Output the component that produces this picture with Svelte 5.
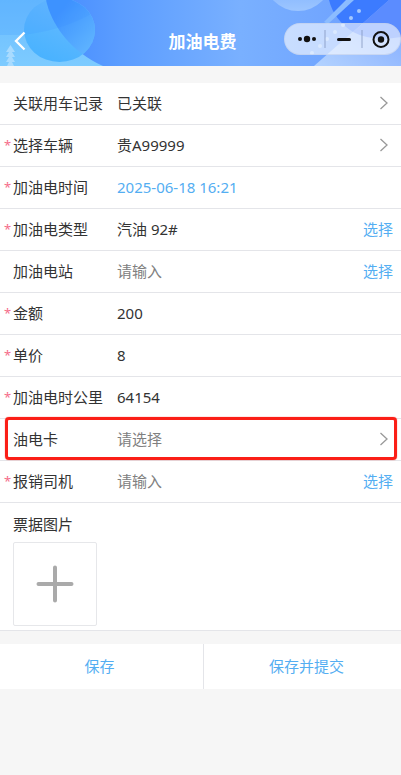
<script>
  let fields = [
    { id: "record", label: "关联用车记录", value: "已关联", type: "link" },
    { id: "car", label: "选择车辆", value: "贵A99999", type: "link", required: true },
    { id: "time", label: "加油电时间", value: "2025-06-18 16:21", type: "date", required: true },
    { id: "kind", label: "加油电类型", value: "汽油 92#", type: "input", required: true, choose: true },
    { id: "station", label: "加油电站", value: "", type: "input", choose: true },
    { id: "amount", label: "金额", value: "200", type: "input", required: true },
    { id: "price", label: "单价", value: "8", type: "input", required: true },
    { id: "mileage", label: "加油电时公里", value: "64154", type: "input", required: true },
    { id: "card", label: "油电卡", value: "", type: "link", marked: true },
    { id: "driver", label: "报销司机", value: "", type: "input", required: true, choose: true },
  ];
</script>

<header class="header">
  <svg class="sky" viewBox="0 0 401 66" preserveAspectRatio="xMidYMid slice" aria-hidden="true">
    <defs>
      <linearGradient id="base" x1="0" y1="0" x2="1" y2="0">
        <stop offset="0.1" stop-color="#4389ff" />
        <stop offset="0.3" stop-color="#5b9dff" />
        <stop offset="0.6" stop-color="#79b0ff" />
        <stop offset="1" stop-color="#6b9dff" />
      </linearGradient>
      <linearGradient id="left" x1="0" y1="0" x2="0" y2="1">
        <stop offset="0" stop-color="#6bbcff" />
        <stop offset="1" stop-color="#7dcbff" />
      </linearGradient>
      <linearGradient id="ball" x1="0.8" y1="0" x2="0.3" y2="1">
        <stop offset="0" stop-color="#6cbcff" />
        <stop offset="1" stop-color="#48b2ff" />
      </linearGradient>
      <linearGradient id="ballDark" x1="0" y1="0" x2="1" y2="1">
        <stop offset="0.2" stop-color="#3f94ff" />
        <stop offset="0.9" stop-color="#66bbff" />
      </linearGradient>
      <linearGradient id="moon" x1="0" y1="0" x2="0" y2="1">
        <stop offset="0.6" stop-color="#7fb2ff" />
        <stop offset="1" stop-color="#9dc6ff" />
      </linearGradient>
      <linearGradient id="hill" x1="0" y1="1" x2="1" y2="0">
        <stop offset="0" stop-color="#b4d3ff" />
        <stop offset="1" stop-color="#7ba6ff" />
      </linearGradient>
      <clipPath id="inBall"><ellipse cx="59.5" cy="30" rx="35.5" ry="32" /></clipPath>
    </defs>
    <rect width="401" height="66" fill="url(#base)" />
    <path d="M0 0H46C52 27 72 52 103 66H0Z" fill="url(#left)" />
    <path d="M0 0H46L53 20L57 28Q35 36 0 35Z" fill="#4da4ff" opacity="0.3" />
    <ellipse cx="59.5" cy="30" rx="35.5" ry="32" fill="url(#ball)" />
    <g clip-path="url(#inBall)">
      <path d="M46 0C52 27 72 52 103 66V0Z" fill="url(#ballDark)" />
      <path d="M20 35Q70 31 114 0H20Z" fill="#2f83ff" opacity="0.12" />
    </g>
    <path d="M10.500 45l4.500 7h-3l3 5h-3l3 5h-3l2 4h-7l2-4h-3l3-5h-3l3-5h-3z" fill="#a8dbff" />
    <circle cx="298" cy="-23" r="34" fill="url(#moon)" />
    <path d="M389 0L314 66H401V0Z" fill="url(#hill)" />
    <path d="M329 0H389L353 32Q334 20 329 0Z" fill="#3c7bff" />
    <path d="M389 0L353 32Q372 42 401 37V0Z" fill="#5b8cff" />
    <path d="M346 0H354L328 24L324 22Z" fill="#8bbcff" />
    <g fill="#a3c8ff">
      <circle cx="359" cy="11" r="2" />
      <circle cx="351" cy="18" r="2" />
      <circle cx="343" cy="25" r="2" />
      <circle cx="335" cy="32" r="2" />
      <circle cx="327" cy="39" r="2" />
      <circle cx="320" cy="46" r="2" />
      <circle cx="312" cy="53" r="2" />
    </g>
  </svg>
  <button class="back" aria-label="返回">
    <svg width="12" height="20" viewBox="0 0 12 20">
      <path d="M10.500 1.500L2 10l8.500 8.500" fill="none" stroke="#fff" stroke-width="2.300" />
    </svg>
  </button>
  <h1>加油电费</h1>
  <div class="capsule">
    <button aria-label="更多">
      <svg width="20" height="20" viewBox="0 0 20 20">
        <circle cx="3" cy="10" r="2" /><circle cx="10" cy="10" r="3.200" /><circle cx="17" cy="10" r="2" />
      </svg>
    </button>
    <button aria-label="最小化">
      <svg width="20" height="20" viewBox="0 0 20 20"><rect x="3" y="9" width="14" height="3" rx="1.500" /></svg>
    </button>
    <button aria-label="关闭">
      <svg width="20" height="20" viewBox="0 0 20 20">
        <circle cx="10" cy="10.500" r="7.500" fill="none" stroke="#111" stroke-width="2" />
        <circle cx="10" cy="10.500" r="3.200" />
      </svg>
    </button>
  </div>
</header>

<main>
  <form class="form">
    {#each fields as f}
      <div class="row" class:marked={f.marked}>
        <span class="star">{f.required ? "*" : ""}</span>
        <label for={f.id}>{f.label}</label>
        {#if f.type === "input"}
          <input id={f.id} type="text" placeholder="请输入" bind:value={f.value} />
        {:else}
          <button
            type="button"
            id={f.id}
            class="value"
            class:date={f.type === "date"}
            class:empty={f.value === ""}>{f.value || "请选择"}</button>
        {/if}
        {#if f.choose}
          <button type="button" class="choose">选择</button>
        {/if}
        {#if f.type === "link"}
          <svg class="arrow" width="10" height="14" viewBox="0 0 10 14" aria-hidden="true">
            <path d="M1.500 1L8 7l-6.500 6" fill="none" stroke="#999" stroke-width="1.300" />
          </svg>
        {/if}
      </div>
    {/each}
    <div class="photos">
      <span id="photoLabel">票据图片</span>
      <button type="button" class="upload" aria-labelledby="photoLabel">
        <svg width="38" height="38" viewBox="0 0 38 38">
          <path d="M19 2.500v33M2.500 19h33" stroke="#aaa" stroke-width="4" stroke-linecap="round" />
        </svg>
      </button>
    </div>
  </form>

  <div class="actions">
    <button type="button">保存</button>
    <button type="button">保存并提交</button>
  </div>
</main>

<style>
  :global(body) {
    background: #f6f6f6;
    color: #333;
    font-family: "Noto Sans", "Noto Sans CJK SC", sans-serif;
    font-size: 15px;
    line-height: 20px;
  }
  button,
  input {
    margin: 0;
    padding: 0;
    border: 0;
    background: none;
    color: inherit;
    font: inherit;
  }
  .header {
    position: relative;
    display: grid;
    grid-template-columns: 117px 1fr 117px;
    align-items: center;
    box-sizing: border-box;
    height: 66px;
    padding-top: 18px;
    overflow: hidden;
  }
  .sky {
    position: absolute;
    top: 0;
    left: 0;
    width: 100%;
    height: 66px;
  }
  .back,
  h1,
  .capsule {
    z-index: 1;
  }
  .back {
    display: flex;
    padding: 0 0 2px 14px;
  }
  h1 {
    margin: 0;
    padding-left: 4px;
    color: #fff;
    font-size: 17px;
    font-weight: bold;
    line-height: 24px;
    text-align: center;
  }
  .capsule {
    display: flex;
    align-items: center;
    align-self: start;
    box-sizing: border-box;
    height: 32px;
    margin-top: 5px;
    border: 1px solid rgba(190, 205, 235, 0.6);
    border-radius: 16px;
    background: rgba(255, 255, 255, 0.6);
  }
  .capsule button {
    display: flex;
    flex: 1;
    align-items: center;
    justify-content: center;
    height: 18px;
  }
  .capsule button:first-child {
    padding-left: 4px;
  }
  .capsule button:last-child {
    padding-right: 2px;
  }
  .capsule button + button {
    border-left: 2px solid rgba(130, 150, 190, 0.4);
  }
  .capsule svg {
    fill: #111;
  }
  .form {
    margin-top: 17px;
    background: #fff;
  }
  .row {
    position: relative;
    display: flex;
    align-items: center;
    box-sizing: border-box;
    height: 42px;
    padding: 0 8px 2px 4px;
    border-bottom: 1px solid #e4e5e9;
  }
  .star {
    width: 9px;
    color: #f56c8a;
    font-size: 13px;
  }
  label {
    width: 104px;
  }
  input,
  .value {
    flex: 1;
    min-width: 0;
    text-align: left;
    outline: none;
  }
  input::placeholder,
  .empty {
    color: #808080;
    opacity: 1;
  }
  .date,
  .choose,
  .actions button {
    color: #54aef2;
  }
  .arrow {
    margin-right: 4px;
  }
  .marked::after {
    content: "";
    position: absolute;
    top: -2px;
    right: 4px;
    bottom: 0;
    left: 5px;
    border: 3px solid #fb1f17;
    border-radius: 4px;
    box-shadow: 0 0 1px #fb1f17;
    pointer-events: none;
  }
  .photos {
    display: flex;
    flex-direction: column;
    gap: 8px;
    padding: 11px 13px 4px;
    border-bottom: 1px solid #e4e5e9;
  }
  .upload {
    display: flex;
    align-items: center;
    justify-content: center;
    box-sizing: border-box;
    width: 84px;
    height: 84px;
    border: 1px solid #e6e7ea;
    border-radius: 2px;
  }
  .actions {
    display: grid;
    grid-template-columns: 203fr 198fr;
    margin-top: 13px;
    background: #fff;
  }
  .actions button {
    height: 45px;
    padding: 0 4px 2px 0;
  }
  .actions button + button {
    padding: 0 0 2px 8px;
    border-left: 1px solid #e4e5e9;
  }
</style>
